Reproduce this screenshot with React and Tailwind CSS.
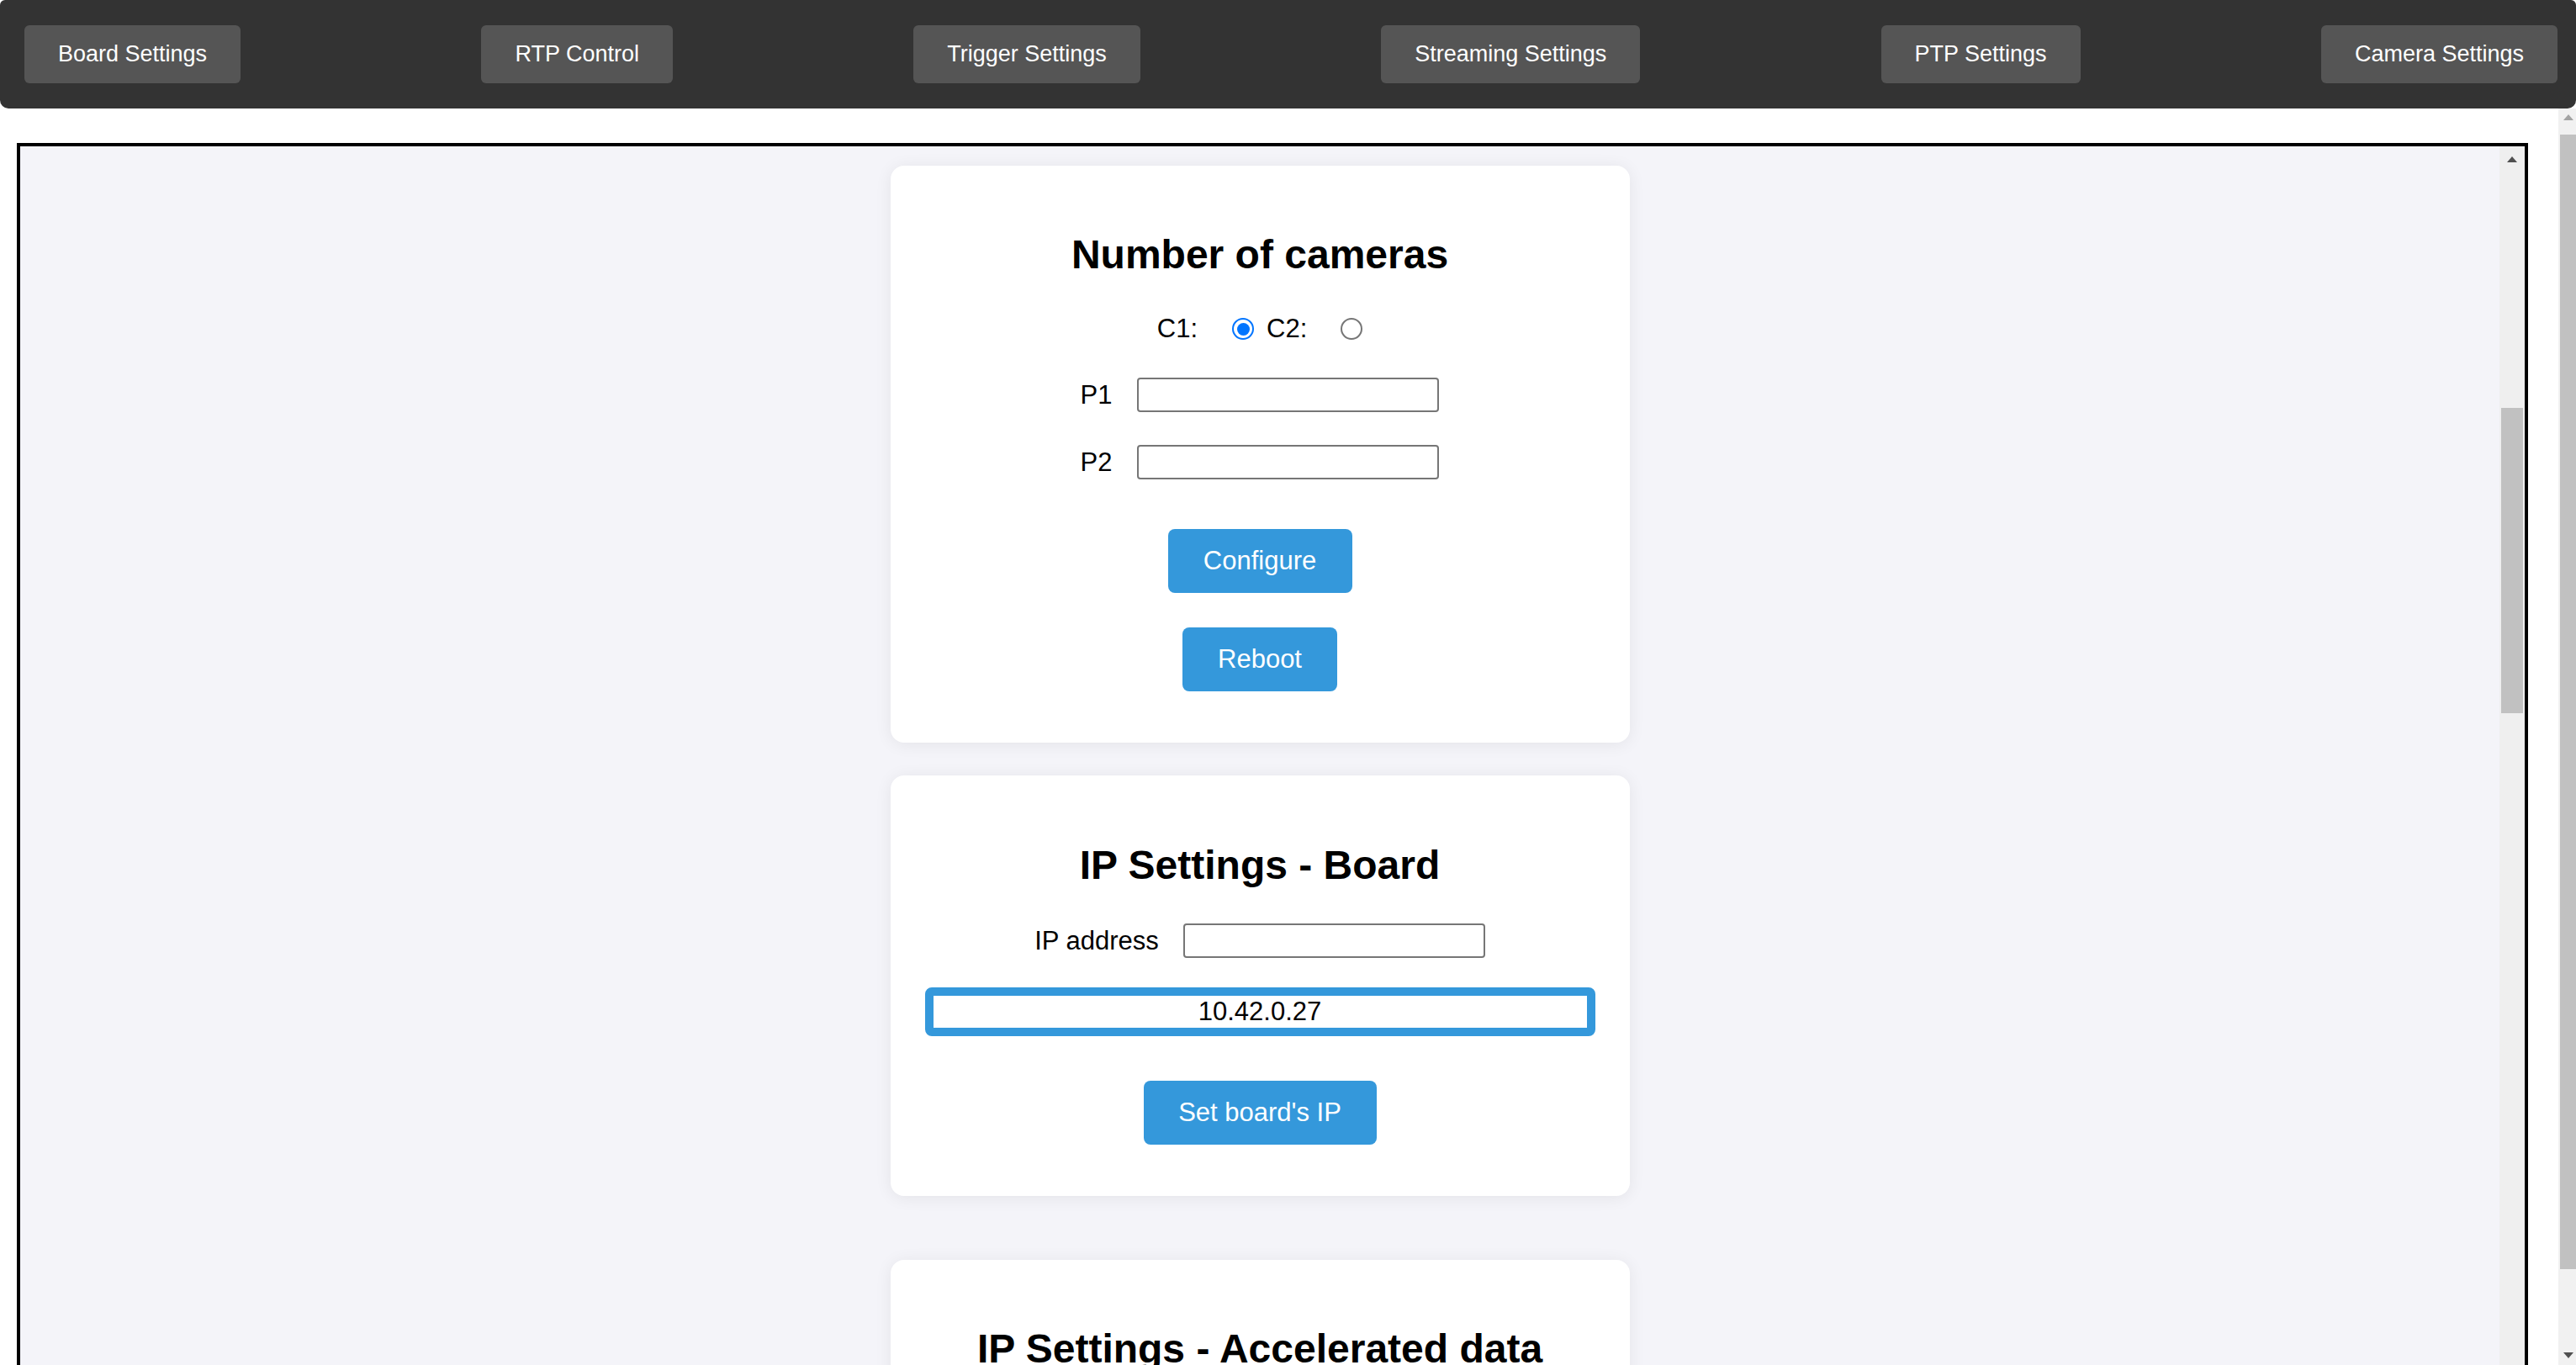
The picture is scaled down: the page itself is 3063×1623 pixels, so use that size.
import { useState } from "react";

const navItems = [
  "Board Settings",
  "RTP Control",
  "Trigger Settings",
  "Streaming Settings",
  "PTP Settings",
  "Camera Settings",
];

function Radio({ checked, onClick }) {
  return (
    <span
      role="radio"
      aria-checked={checked}
      onClick={onClick}
      className={
        checked
          ? "w-[26px] h-[26px] rounded-full border-[2px] border-[#0075ff] bg-white flex items-center justify-center"
          : "w-[26px] h-[26px] rounded-full border-[2px] border-[#767676] bg-white flex items-center justify-center"
      }
    >
      {checked && <span className="w-[15px] h-[15px] rounded-full bg-[#0075ff]" />}
    </span>
  );
}

function Arrow({ up, color }) {
  return (
    <svg width="12" height="7" viewBox="0 0 12 7">
      <polygon points={up ? "6,0 12,7 0,7" : "0,0 12,0 6,7"} fill={color} />
    </svg>
  );
}

function Card({ children, className }) {
  return (
    <div
      className={
        "w-[879px] shrink-0 bg-white rounded-[16px] shadow-[0_2px_20px_rgba(0,0,0,0.07)] flex flex-col items-center px-[41px] " +
        className
      }
    >
      {children}
    </div>
  );
}

function Title({ children }) {
  return <h2 className="text-[48px] font-bold leading-[54px] text-black whitespace-nowrap">{children}</h2>;
}

function BlueButton({ children, width, className = "" }) {
  return (
    <button
      className={
        "h-[76px] rounded-[8px] bg-[#3498db] text-white text-[31px] leading-[36px] flex items-center justify-center " +
        width +
        " " +
        className
      }
    >
      {children}
    </button>
  );
}

export default function App() {
  const [cams, setCams] = useState("C1");
  const [p1, setP1] = useState("");
  const [p2, setP2] = useState("");
  const [ip, setIp] = useState("");

  return (
    <div className="h-screen w-full overflow-hidden flex flex-col bg-white font-['Liberation_Sans',Arial,sans-serif]">
      {/* top nav */}
      <nav className="h-[129px] shrink-0 bg-[#333333] rounded-b-[10px] rounded-t-[6px] flex items-center justify-between pl-[29px] pr-[22px]">
        {navItems.map((item) => (
          <button
            key={item}
            className="h-[69px] px-[40px] bg-[#555555] text-white text-[27px] rounded-[6px] whitespace-nowrap"
          >
            {item}
          </button>
        ))}
      </nav>

      <div className="flex-1 min-h-0 flex">
        {/* page area */}
        <div className="flex-1 min-w-0 overflow-hidden pt-[41px] pl-[20px] pr-[36px]">
          <div className="h-[1600px] border-[4px] border-black bg-[#f4f4f9] flex">
            <div className="flex-1 min-w-0 flex flex-col items-center pt-[23px]">
              <Card className="pt-[79px] pb-[61px]">
                <Title>Number of cameras</Title>
                <div className="mt-[43px] h-[36px] flex items-center text-[31px] leading-[36px] text-black">
                  <span>C1:</span>
                  <span className="ml-[41px]">
                    <Radio checked={cams === "C1"} onClick={() => setCams("C1")} />
                  </span>
                  <span className="ml-[15px]">C2:</span>
                  <span className="ml-[40px]">
                    <Radio checked={cams === "C2"} onClick={() => setCams("C2")} />
                  </span>
                </div>
                <div className="mt-[40px] h-[41px] flex items-center text-[31px] leading-[36px] text-black">
                  <span className="mr-[30px]">P1</span>
                  <input
                    value={p1}
                    onChange={(e) => setP1(e.target.value)}
                    className="w-[359px] h-[41px] border-[2px] border-[#767676] rounded-[4px] bg-white px-2 text-[26px] leading-[30px]"
                  />
                </div>
                <div className="mt-[39px] h-[41px] flex items-center text-[31px] leading-[36px] text-black">
                  <span className="mr-[30px]">P2</span>
                  <input
                    value={p2}
                    onChange={(e) => setP2(e.target.value)}
                    className="w-[359px] h-[41px] border-[2px] border-[#767676] rounded-[4px] bg-white px-2 text-[26px] leading-[30px]"
                  />
                </div>
                <BlueButton width="w-[219px]" className="mt-[59px]">
                  Configure
                </BlueButton>
                <BlueButton width="w-[184px]" className="mt-[41px]">
                  Reboot
                </BlueButton>
              </Card>

              <Card className="mt-[39px] pt-[80px] pb-[61px]">
                <Title>IP Settings - Board</Title>
                <div className="mt-[42px] h-[41px] flex items-center text-[31px] leading-[36px] text-black">
                  <span className="mr-[29px]">IP address</span>
                  <input
                    value={ip}
                    onChange={(e) => setIp(e.target.value)}
                    className="w-[359px] h-[41px] border-[2px] border-[#767676] rounded-[4px] bg-white px-2 text-[26px] leading-[30px]"
                  />
                </div>
                <input
                  readOnly
                  value="10.42.0.27"
                  className="mt-[35px] w-full h-[58px] border-[10px] border-[#3498db] rounded-[8px] bg-white text-center text-[31px] leading-[36px] text-black outline-none"
                />
                <BlueButton width="w-[277px]" className="mt-[53px]">
                  Set board's IP
                </BlueButton>
              </Card>

              <Card className="mt-[76px] pt-[79px] pb-[61px]">
                <Title>IP Settings - Accelerated data</Title>
              </Card>
            </div>

            {/* inner scrollbar */}
            <div className="w-[30px] shrink-0 bg-[#efefef] flex flex-col items-center">
              <div className="h-[30px] w-full flex items-center justify-center">
                <Arrow up color="#505050" />
              </div>
              <div className="mt-[281px] h-[363px] w-[26px] bg-[#c1c1c1]" />
            </div>
          </div>
        </div>

        {/* page scrollbar */}
        <div className="w-[21px] shrink-0 bg-[#f1f1f1] flex flex-col">
          <div className="h-[20px] flex items-center justify-center pl-[2px]">
            <Arrow up color="#a3a3a3" />
          </div>
          <div className="mt-[11px] ml-[2px] h-[1349px] bg-[#c1c1c1]" />
          <div className="mt-auto h-[24px] flex items-center justify-center pl-[2px]">
            <Arrow color="#505050" />
          </div>
        </div>
      </div>
    </div>
  );
}
